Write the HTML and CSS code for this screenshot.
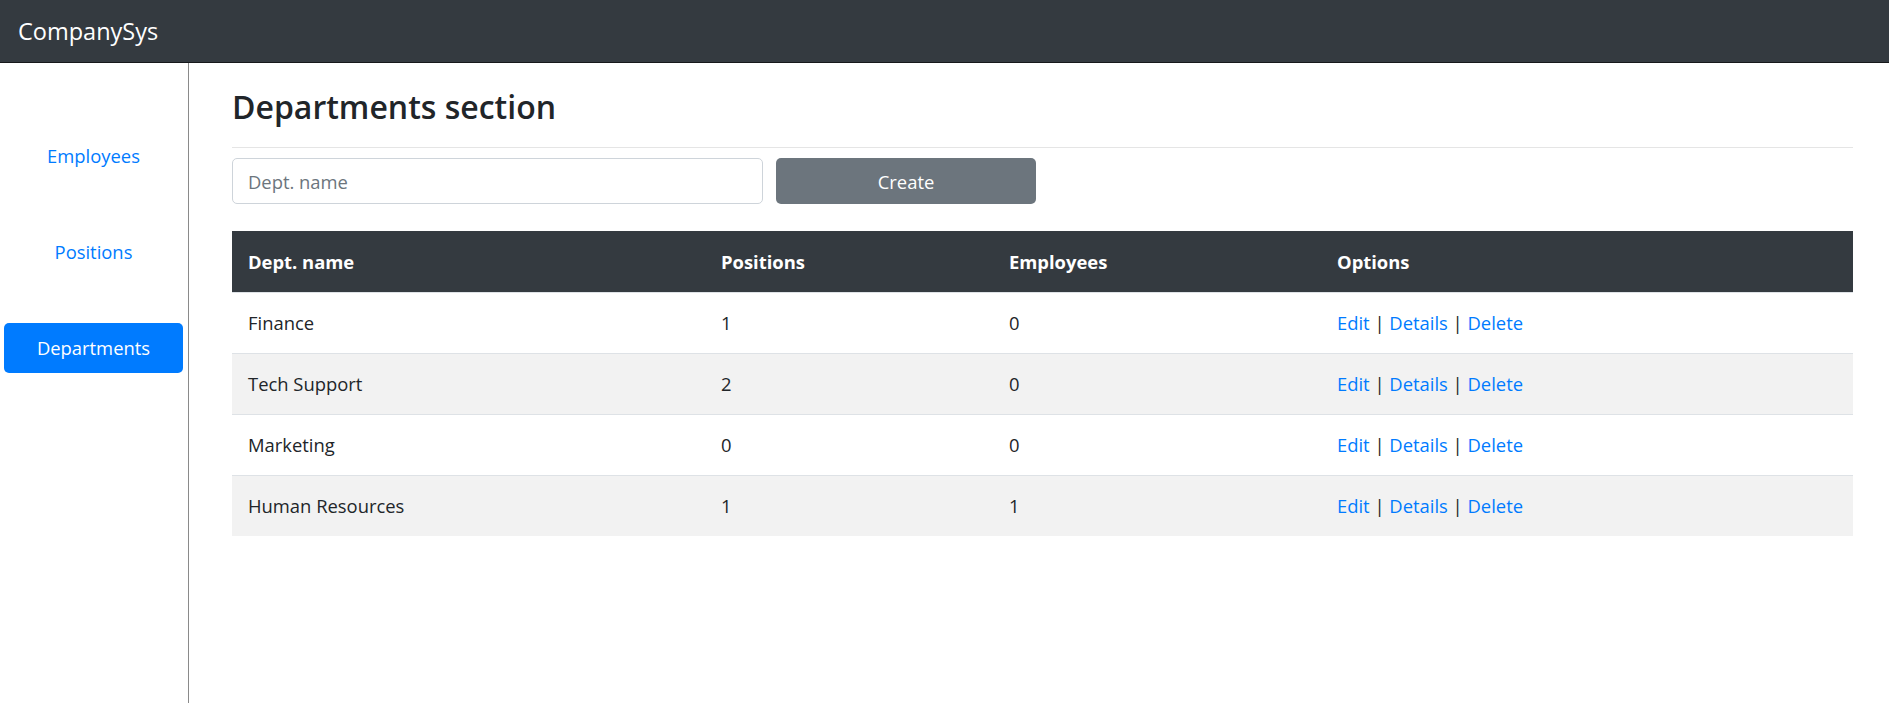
FILE: index.html
```html
<!DOCTYPE html>
<html lang="en">
<head>
<meta charset="utf-8">
<title>CompanySys - Departments</title>
<link rel="stylesheet" href="styles.css">
</head>
<body>
<header class="navbar">
  <a class="brand" href="#">CompanySys</a>
</header>
<div class="layout">
  <nav class="sidebar">
    <a class="side-link" href="#">Employees</a>
    <a class="side-link" href="#">Positions</a>
    <a class="side-link active" href="#">Departments</a>
  </nav>
  <main class="main">
    <h1 class="title">Departments section</h1>
    <hr class="rule">
    <form class="create-form">
      <input class="text-input" type="text" placeholder="Dept. name">
      <button class="btn-create" type="button">Create</button>
    </form>
    <table class="data-table">
      <colgroup>
        <col class="c1"><col class="c2"><col class="c3"><col class="c4">
      </colgroup>
      <thead>
        <tr><th>Dept. name</th><th>Positions</th><th>Employees</th><th>Options</th></tr>
      </thead>
      <tbody>
        <tr><td>Finance</td><td>1</td><td>0</td><td><a href="#">Edit</a> | <a href="#">Details</a> | <a href="#">Delete</a></td></tr>
        <tr><td>Tech Support</td><td>2</td><td>0</td><td><a href="#">Edit</a> | <a href="#">Details</a> | <a href="#">Delete</a></td></tr>
        <tr><td>Marketing</td><td>0</td><td>0</td><td><a href="#">Edit</a> | <a href="#">Details</a> | <a href="#">Delete</a></td></tr>
        <tr><td>Human Resources</td><td>1</td><td>1</td><td><a href="#">Edit</a> | <a href="#">Details</a> | <a href="#">Delete</a></td></tr>
      </tbody>
    </table>
  </main>
</div>
</body>
</html>
```
FILE: styles.css
```css
* { box-sizing: border-box; }

html, body {
  margin: 0;
  padding: 0;
  height: 100%;
}

body {
  font-family: "Open Sans", "Noto Sans", sans-serif;
  font-size: 18.4px;
  color: #212529;
  background: #fff;
}

a { color: #007bff; text-decoration: none; }

.navbar {
  height: 63px;
  background: #343a40;
  border-bottom: 1px solid #16181b;
  display: flex;
  align-items: center;
  padding-left: 18px;
}

.brand {
  color: #fff;
  font-size: 23.5px;
  line-height: 30px;
}

.layout {
  display: flex;
  min-height: calc(100vh - 63px);
}

.sidebar {
  width: 189px;
  flex: none;
  border-right: 1px solid #8a8a8a;
  display: flex;
  flex-direction: column;
  gap: 46px;
  padding: 68px 5px 0 4px;
}

.side-link {
  height: 50px;
  display: flex;
  align-items: center;
  justify-content: center;
  border-radius: 5px;
  line-height: 1;
}

.side-link.active {
  background: #007bff;
  color: #fff;
}

.main {
  flex: 1;
  padding: 0 36px 0 43px;
}

.title {
  font-size: 32px;
  font-weight: 600;
  line-height: 44px;
  margin: 22px 0 0 0;
  color: #212529;
}

.rule {
  border: 0;
  border-top: 1px solid #e5e5e5;
  margin: 18px 0 10px 0;
}

.create-form {
  display: flex;
  gap: 13px;
  margin: 0 0 27px 0;
}

.text-input {
  width: 531px;
  height: 46px;
  border: 1px solid #ced4da;
  border-radius: 5px;
  padding: 0 15px;
  font-family: inherit;
  font-size: 18.4px;
  color: #495057;
}

.text-input::placeholder { color: #6c757d; }

.btn-create {
  width: 260px;
  height: 46px;
  border: 0;
  border-radius: 5px;
  background: #6c757d;
  color: #fff;
  font-family: inherit;
  font-size: 18.4px;
}

.data-table {
  width: 100%;
  border-collapse: collapse;
  table-layout: fixed;
}

.c1 { width: 473px; }
.c2 { width: 288px; }
.c3 { width: 328px; }

.data-table th {
  background: #343a40;
  color: #fff;
  font-weight: 700;
  text-align: left;
  height: 61px;
  padding: 0 16px;
  vertical-align: middle;
}

.data-table td {
  height: 61px;
  padding: 0 16px;
  border-top: 1px solid #dee2e6;
  vertical-align: middle;
}

.data-table tbody tr:nth-child(even) td {
  background: #f2f2f2;
}
```
